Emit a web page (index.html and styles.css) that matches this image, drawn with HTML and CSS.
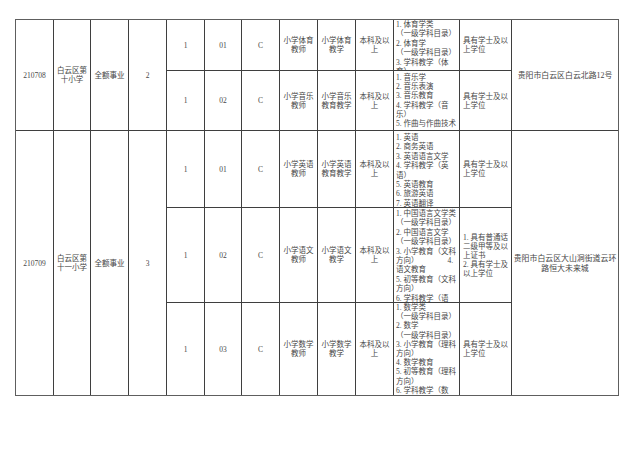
FILE: index.html
```html
<!DOCTYPE html>
<html lang="zh-CN">
<head>
<meta charset="utf-8">
<title>岗位表</title>
<link rel="stylesheet" href="styles.css">
</head>
<body>
<div class="sheet">
  <div class="c s2">210708</div>
  <div class="c s2">白云区第<br>十小学</div>
  <div class="c s2">全额事业</div>
  <div class="c s2">2</div>
  <div class="c">1</div>
  <div class="c">01</div>
  <div class="c">C</div>
  <div class="c">小学体育<br>教师</div>
  <div class="c">小学体育<br>教学</div>
  <div class="c">本科及以<br>上</div>
  <div class="q q0">
    <div>1. 体育学类</div>
    <div>（一级学科目录）</div>
    <div>2. 体育学</div>
    <div>（一级学科目录）</div>
    <div>3. 学科教学（体</div>
    <div>育）</div>
  </div>
  <div class="d">具有学士及以<br>上学位</div>
  <div class="c a s2">贵阳市白云区白云北路12号</div>

  <div class="c">1</div>
  <div class="c">02</div>
  <div class="c">C</div>
  <div class="c">小学音乐<br>教师</div>
  <div class="c">小学音乐<br>教育教学</div>
  <div class="c">本科及以<br>上</div>
  <div class="q q2 tight">
    <div>1. 音乐学</div>
    <div>2. 音乐表演</div>
    <div>3. 音乐教育</div>
    <div>4. 学科教学（音</div>
    <div>乐）</div>
    <div>5. 作曲与作曲技术</div>
  </div>
  <div class="d">具有学士及以<br>上学位</div>

  <div class="c s3">210709</div>
  <div class="c s3">白云区第<br>十一小学</div>
  <div class="c s3">全额事业</div>
  <div class="c s3">3</div>
  <div class="c">1</div>
  <div class="c">01</div>
  <div class="c">C</div>
  <div class="c">小学英语<br>教师</div>
  <div class="c">小学英语<br>教育教学</div>
  <div class="c">本科及以<br>上</div>
  <div class="q q2">
    <div>1. 英语</div>
    <div>2. 商务英语</div>
    <div>3. 英语语言文学</div>
    <div>4. 学科教学（英</div>
    <div>语）</div>
    <div>5. 英语教育</div>
    <div>6. 旅游英语</div>
    <div>7. 英语翻译</div>
  </div>
  <div class="d">具有学士及以<br>上学位</div>
  <div class="c a s3">贵阳市白云区大山洞街道云环<br>路恒大未来城</div>

  <div class="c">1</div>
  <div class="c">02</div>
  <div class="c">C</div>
  <div class="c">小学语文<br>教师</div>
  <div class="c">小学语文<br>教学</div>
  <div class="c">本科及以<br>上</div>
  <div class="q">
    <div>1. 中国语言文学类</div>
    <div>（一级学科目录）</div>
    <div>2. 中国语言文学</div>
    <div>（一级学科目录）</div>
    <div>3. 小学教育（文科</div>
    <div class="split"><span>方向）</span><span>4.</span></div>
    <div>语文教育</div>
    <div>5. 初等教育（文科</div>
    <div>方向）</div>
    <div>6. 学科教学（语</div>
  </div>
  <div class="d">1. 具有普通话<br>二级甲等及以<br>上证书<br>2. 具有学士及<br>以上学位</div>

  <div class="c">1</div>
  <div class="c">03</div>
  <div class="c">C</div>
  <div class="c">小学数学<br>教师</div>
  <div class="c">小学数学<br>教学</div>
  <div class="c">本科及以<br>上</div>
  <div class="q q0 tight">
    <div>1. 数学类</div>
    <div>（一级学科目录）</div>
    <div>2. 数学</div>
    <div>（一级学科目录）</div>
    <div>3. 小学教育（理科</div>
    <div>方向）</div>
    <div>4. 数学教育</div>
    <div>5. 初等教育（理科</div>
    <div>方向）</div>
    <div>6. 学科教学（数</div>
  </div>
  <div class="d">具有学士及以<br>上学位</div>
</div>
</body>
</html>
```

FILE: styles.css
```css
html, body {
  margin: 0;
  padding: 0;
  background: #ffffff;
}

body {
  width: 640px;
  height: 453px;
  overflow: hidden;
  font-family: "Liberation Serif", "Noto Sans CJK SC", serif;
  color: #474747;
}

.sheet {
  margin: 19px 0 0 15px;
  width: 602px;
  display: grid;
  grid-template-columns: 37px 36px 37px 37px 37px 36px 37px 37px 37px 37px 65px 51px 106px;
  grid-template-rows: 50px 59px 76px 94px 92px;
  gap: 1px;
  background: #3f3f3f;
  border: 1px solid #5e5e5e;
}

.sheet > div {
  background: #ffffff;
  overflow: hidden;
  font-size: 7.5px;
  line-height: 9px;
}

.c {
  display: flex;
  align-items: center;
  justify-content: center;
  text-align: center;
}

.s2 {
  grid-row: span 2;
}

.s3 {
  grid-row: span 3;
}

.a {
  font-size: 7.9px !important;
  line-height: 10px !important;
  white-space: nowrap;
  padding-top: 1px;
}

.q {
  padding: 1px 0 0 2px;
  line-height: 9.4px !important;
  white-space: nowrap;
}

.q0 {
  padding-top: 0;
}

.q2 {
  padding-top: 2px;
}

.tight {
  line-height: 9.2px !important;
}

.split {
  display: flex;
  justify-content: space-between;
  padding-right: 6px;
}

.d {
  display: flex;
  align-items: center;
  padding-left: 3px;
  text-align: left;
  white-space: nowrap;
}
```
